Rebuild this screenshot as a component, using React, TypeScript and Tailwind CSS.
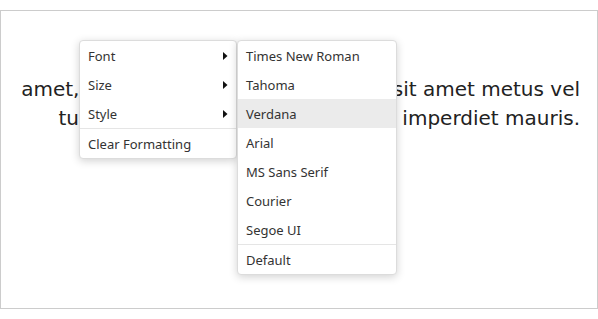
import React from "react";

const Arrow = () => (
  <svg width="5" height="8" viewBox="0 0 5 8" className="absolute right-[8px] top-[11px]">
    <path d="M0 0 L4.5 4 L0 8 Z" fill="#111" />
  </svg>
);

function Item({ label, sub, active }: { label: string; sub?: boolean; active?: boolean }) {
  return (
    <div
      className={`relative h-[29px] flex items-center pl-[8px] pr-[20px] pt-[2px] text-[13px] text-[#333] whitespace-nowrap ${
        active ? "bg-[#ebebeb]" : ""
      }`}
    >
      {label}
      {sub && <Arrow />}
    </div>
  );
}

const Sep = () => <div className="h-px bg-[#e5e5e5]" />;

export default function App() {
  return (
    <div className="w-[598px] h-[319px] bg-white relative" style={{ fontFamily: "'Noto Sans', sans-serif" }}>
      <div className="h-[10px]" />
      <div className="h-[299px] border border-[#cccccc] pt-[64px] pr-[17px]">
        <div
          className="text-right text-[20px] leading-[29px] text-[#222]"
          style={{ fontFamily: "'DejaVu Sans', Verdana, sans-serif" }}
        >
          <div className="whitespace-nowrap">amet, consectetur adipiscing elit. Ac sit amet metus vel</div>
          <div className="whitespace-nowrap">turpis egestas, at vehicula vel leo imperdiet mauris.</div>
        </div>
      </div>

      <div className="absolute left-[79px] top-[40px] w-[158px] bg-white border border-[#dcdcdc] rounded-[4px] shadow-[0_2px_8px_rgba(0,0,0,0.18)]">
        <Item label="Font" sub />
        <Item label="Size" sub />
        <Item label="Style" sub />
        <Sep />
        <Item label="Clear Formatting" />
      </div>

      <div className="absolute left-[237px] top-[40px] w-[160px] bg-white border border-[#dcdcdc] rounded-[4px] shadow-[0_2px_8px_rgba(0,0,0,0.18)]">
        <Item label="Times New Roman" />
        <Item label="Tahoma" />
        <Item label="Verdana" active />
        <Item label="Arial" />
        <Item label="MS Sans Serif" />
        <Item label="Courier" />
        <Item label="Segoe UI" />
        <Sep />
        <Item label="Default" />
      </div>
    </div>
  );
}
